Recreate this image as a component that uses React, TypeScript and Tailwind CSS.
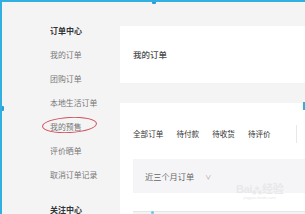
import React from "react";

const font = { fontFamily: '"Noto Sans CJK SC", "Noto Sans", sans-serif' };

export default function App() {
  const items = ["我的订单", "团购订单", "本地生活订单", "我的预售", "评价晒单", "取消订单记录"];
  return (
    <div
      className="relative w-[305px] h-[214px] overflow-hidden bg-[#f4f4f5] border-t-2 border-l-2 border-[#33aee0] flex items-start"
      style={font}
    >
      {/* selection handles */}
      <span className="absolute top-[-2px] left-[150px] w-[4px] h-[4px] bg-[#2a9fd6] rounded-[1px]" />
      <span className="absolute top-[104px] left-[-2px] w-[4px] h-[5px] bg-[#2a9fd6] rounded-[1px]" />
      <span className="absolute top-[100px] right-0 w-[2px] h-[8px] bg-[#33aee0]" />

      {/* sidebar */}
      <div className="w-[118px] shrink-0 pl-[48px] pt-[17px] flex flex-col">
        <div className="shrink-0 h-[24px] flex items-center text-[8px] font-bold text-[#333]">订单中心</div>
        {items.map((t) => (
          <div key={t} className="shrink-0 relative h-[24px] flex items-center text-[7.9px] text-[#777]">
            <span className="relative">
              {t}
              {t === "我的预售" && (
                <span className="absolute left-[-8px] top-[-4px] w-[55px] h-[16px] rounded-[50%] border border-[#d5505a] rotate-[-3deg]" />
              )}
            </span>
          </div>
        ))}
        <div className="shrink-0 mt-[11px] h-[24px] flex items-center text-[8px] font-bold text-[#333]">关注中心</div>
      </div>

      {/* main */}
      <div className="flex-1 pt-[24px] flex flex-col gap-[20px]">
        <div className="shrink-0 h-[57px] bg-white pl-[13px] flex items-center">
          <span className="text-[8.5px] font-medium text-[#4a4a4a]">我的订单</span>
        </div>
        <div className="shrink-0 bg-white pl-[13px] pt-[22px] flex flex-col">
          <div className="shrink-0 h-[18px] flex items-center gap-[13px] text-[7.6px] text-[#333]">
            <span>全部订单</span>
            <span>待付款</span>
            <span>待收货</span>
            <span>待评价</span>
            <span className="ml-[12px] w-px h-[18px] bg-[#e8e8e8]" />
          </div>
          <div className="shrink-0 mt-[16px] h-[34px] bg-[#f5f5f7] pl-[12px] flex items-center text-[8.2px] text-[#666]">
            <span>近三个月订单</span>
            <span className="ml-[11px] text-[6px] text-[#999]">∨</span>
          </div>
          <div className="shrink-0 mt-[18px] h-[10px] bg-[#f3f3f5] border-t border-[#e6e6e8] relative">
            <span className="absolute left-[18px] top-[-1px] w-[3px] h-[3px] bg-[#6cc7e8] rounded-full" />
          </div>
        </div>
      </div>

      {/* watermark */}
      <div className="absolute left-[234px] top-[181px] flex flex-col items-center leading-none pointer-events-none">
        <span className="text-[11px] font-bold text-[#e8e8eb] tracking-tight" style={{ fontFamily: '"Liberation Sans", sans-serif' }}>
          Bai<span className="text-[9px]">⁂</span>
          <span style={font}>经验</span>
        </span>
        <span className="text-[4px] text-[#e8e8eb] mt-[1px]" style={{ fontFamily: '"Liberation Sans", sans-serif' }}>jingyan.baidu.com</span>
      </div>
    </div>
  );
}
